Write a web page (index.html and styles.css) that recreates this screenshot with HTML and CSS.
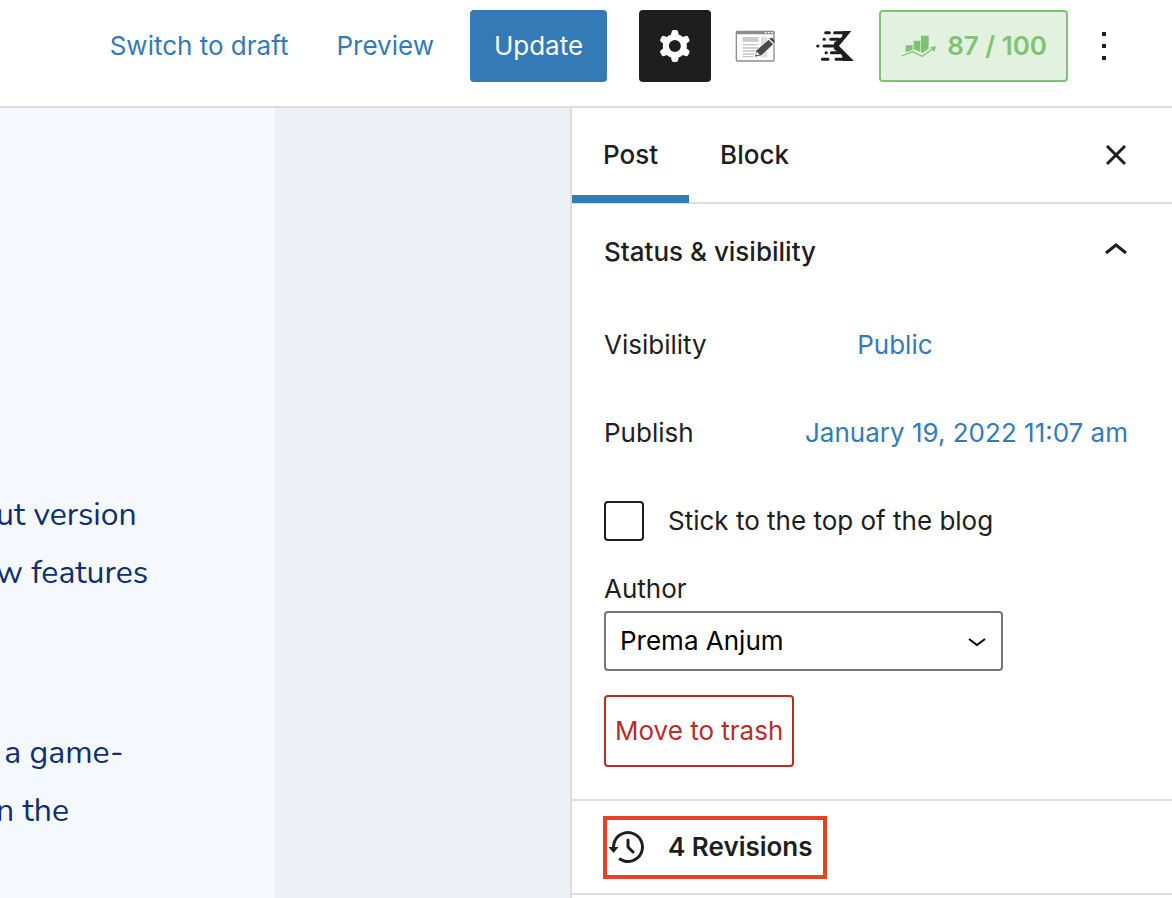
FILE: index.html
```html
<!DOCTYPE html>
<html lang="en">
<head>
<meta charset="utf-8">
<meta name="viewport" content="width=device-width, initial-scale=1">
<title>Edit Post</title>
<link rel="stylesheet" href="styles.css">
</head>
<body>
<div class="editor">
  <header class="topbar">
    <button type="button" class="btn btn-link">Switch to draft</button>
    <button type="button" class="btn btn-link">Preview</button>
    <button type="button" class="btn btn-primary">Update</button>
    <div class="tools">
      <button type="button" class="btn btn-icon is-pressed" aria-label="Settings">
        <svg width="48" height="48" viewBox="0 0 24 24" fill="currentColor"><path fill-rule="evenodd" d="M10.289 4.836A1 1 0 0111.275 4h1.306a1 1 0 01.987.836l.244 1.466c.787.26 1.503.679 2.108 1.218l1.393-.522a1 1 0 011.216.437l.653 1.13a1 1 0 01-.23 1.273l-1.148.944a6.025 6.025 0 010 2.435l1.149.946a1 1 0 01.23 1.272l-.653 1.13a1 1 0 01-1.216.437l-1.394-.522c-.605.54-1.32.958-2.108 1.218l-.244 1.466a1 1 0 01-.987.836h-1.306a1 1 0 01-.986-.836l-.244-1.466a5.995 5.995 0 01-2.108-1.218l-1.394.522a1 1 0 01-1.217-.436l-.653-1.131a1 1 0 01.23-1.272l1.149-.946a6.026 6.026 0 010-2.435l-1.148-.944a1 1 0 01-.23-1.272l.653-1.131a1 1 0 011.217-.437l1.393.522a5.994 5.994 0 012.108-1.218l.244-1.466zM14.929 12a3 3 0 11-6 0 3 3 0 016 0z"/></svg>
      </button>
      <button type="button" class="btn btn-icon" aria-label="Page editor">
        <svg width="40" height="32" viewBox="0 0 120 96">
          <rect x="4" y="4" width="113" height="89" rx="3" fill="#fff" stroke="#8c8c8c" stroke-width="4"/>
          <path fill="#8c8c8c" d="M4 3h112v10H4z"/>
          <path stroke="#fff" stroke-width="4" stroke-dasharray="5 4" d="M90 8h24"/>
          <path fill="#ccc" d="M23 21h48v15H23z"/>
          <path fill="#ddd" d="M78 21h19v61H78z"/>
          <path stroke="#c4c4c4" stroke-width="4" d="M23 44h48M23 54h48M23 63h40M23 72h34M23 80h32"/>
          <path fill="#4a4a4a" stroke="#fff" stroke-width="4" paint-order="stroke" d="M60 80l5-19 36-32 13 14-35 33z"/>
          <path fill="#4a4a4a" d="M103 26q6-6 12 0 6 7 1 13z"/>
          <path fill="#fff" d="M66 65l8 9-8 2-3-3z"/>
        </svg>
      </button>
      <button type="button" class="btn btn-icon" aria-label="Performance">
        <svg width="40" height="32" viewBox="0 0 120 96" fill="#1e1e1e" stroke="#1e1e1e">
          <path stroke="none" d="M109 3H84l-3 17-24 18v20l24 18 3 17h33L72 48z"/>
          <path fill="none" stroke-width="9" stroke-linecap="round" d="M32 8h11M59 8h25M27 28h1M47 28h24M8 48h1M27 48h36M33 68h1M49 68h24M22 88h17M63 88h25"/>
        </svg>
      </button>
      <button type="button" class="btn btn-score" aria-label="SEO score 87 / 100">
        <svg width="36" height="24" viewBox="0 0 108 72" fill="#7cc471">
          <path d="M14 34h21v13l-21 8zM38 20h20v34L38 46zM60 5h23v39L64 57l-4-2z"/>
          <path fill="none" stroke="#7cc471" stroke-width="4" d="M2 66l33-13 29 14 33-24"/>
          <path d="M88 40l17-3-5 17z"/>
        </svg>
        <span>87 / 100</span>
      </button>
      <button type="button" class="btn btn-icon" aria-label="Options">
        <svg width="48" height="48" viewBox="0 0 24 24" fill="currentColor"><path d="M11 5h2v2h-2zM11 11h2v2h-2zM11 17h2v2h-2z"/></svg>
      </button>
    </div>
  </header>

  <div class="workspace">
    <main class="canvas">
      <article class="post">
        <p>ut version<br>w features</p>
        <p>&nbsp;a game-<br>n the</p>
      </article>
    </main>

    <aside class="sidebar">
      <nav class="tabs">
        <button type="button" class="tab is-active">Post</button>
        <button type="button" class="tab">Block</button>
        <button type="button" class="btn btn-close" aria-label="Close settings">
          <svg width="48" height="48" viewBox="0 0 48 48" fill="none" stroke="currentColor" stroke-width="3"><path d="M15 15l18 18M33 15L15 33"/></svg>
        </button>
      </nav>

      <section class="panel">
        <h2 class="panel-title">
          <button type="button" class="panel-toggle" aria-expanded="true">
            <span>Status &amp; visibility</span>
            <svg width="48" height="48" viewBox="0 0 48 48" fill="none" stroke="currentColor" stroke-width="3"><path d="M14 25l10-8 10 8"/></svg>
          </button>
        </h2>
        <div class="panel-body">
          <div class="row">
            <span class="row-label">Visibility</span>
            <button type="button" class="btn row-value">Public</button>
          </div>
          <div class="row">
            <span class="row-label">Publish</span>
            <button type="button" class="btn row-value">January 19, 2022 11:07 am</button>
          </div>
          <div class="check">
            <input type="checkbox" id="sticky">
            <label for="sticky">Stick to the top of the blog</label>
          </div>
          <div class="field">
            <label for="author">Author</label>
            <div class="select">
              <select id="author"><option>Prema Anjum</option></select>
              <svg class="chevron" width="20" height="12" viewBox="0 0 20 12" fill="none" stroke="#000" stroke-width="2"><path d="M2 3l8 6 8-6"/></svg>
            </div>
          </div>
          <button type="button" class="btn btn-trash">Move to trash</button>
        </div>
      </section>

      <section class="panel revisions">
        <a class="revisions-link" href="#revisions">
          <svg width="48" height="48" viewBox="0 0 24 24" fill="currentColor"><path d="M5.5 12h1.75l-2.5 3-2.5-3H4a8 8 0 113.134 6.35l.907-1.194A6.5 6.5 0 105.5 12zm9.53 1.97l-2.28-2.28V8.5a.75.75 0 00-1.5 0V12a.747.747 0 00.218.529l1.282-.84-1.28.842 2.5 2.5a.75.75 0 101.06-1.061z"/></svg>
          <span>4 Revisions</span>
        </a>
      </section>
    </aside>
  </div>
</div>
</body>
</html>
```
FILE: styles.css
```css
* { box-sizing: border-box; }

body {
  margin: 0;
  background: #fff;
  color: #1e1e1e;
  font: 26px/32px Inter, "Liberation Sans", sans-serif;
}

button, select, input { font: inherit; color: inherit; margin: 0; }
svg { display: block; flex: none; }

.editor { display: flex; flex-direction: column; min-height: 100vh; }

.topbar {
  display: flex;
  justify-content: flex-end;
  align-items: center;
  padding: 10px 32px 24px;
  border-bottom: 2px solid #ddd;
}

.btn {
  display: flex;
  align-items: center;
  justify-content: center;
  height: 72px;
  padding: 0 24px;
  border: 0;
  border-radius: 4px;
  background: none;
  white-space: nowrap;
  cursor: pointer;
}
.btn-link { color: #347ab7; }
.btn-primary { margin-left: 12px; background: #347ab7; color: #fff; }

.tools { display: flex; gap: 8px; margin-left: 32px; }
.btn-icon { width: 72px; padding: 0; }
.btn-icon:last-child { margin-left: -8px; }
.is-pressed { background: #1e1e1e; color: #fff; }
.btn-score {
  gap: 10px;
  padding: 0 19px 0 20px;
  border: 2px solid #7cc471;
  background: #e3f1e0;
  color: #7cc471;
  font-weight: 600;
}

.workspace { display: flex; flex: 1; }

.canvas { flex: 1; min-width: 0; background: #edf1f5; overflow: hidden; }
.post {
  width: calc(100% - 295px);
  height: 100%;
  padding-top: 378px;
  background: #f5f9ff;
  color: #10306b;
  font: 32px/58px Nunito, Lato, "Open Sans", sans-serif;
}
.post p { margin: 0 0 0 -4px; white-space: nowrap; }
.post p + p { margin-top: 122px; }

.sidebar { flex: none; width: 602px; border-left: 2px solid #ddd; background: #fff; }

.tabs {
  display: flex;
  height: 96px;
  padding-right: 20px;
  border-bottom: 2px solid #ddd;
  align-items: center;
}
.tab {
  height: 95px;
  padding: 0 31px;
  border: 0;
  background: none;
  font-weight: 500;
}
.is-active { box-shadow: inset 0 -8px #347ab7; }
.btn-close { margin-left: auto; padding: 0 12px; }

.panel { border-bottom: 2px solid #ddd; }
.panel-title { margin: 0; font-size: 26px; font-weight: 500; }
.panel-toggle {
  display: flex;
  align-items: center;
  justify-content: space-between;
  width: 100%;
  height: 96px;
  padding: 0 32px;
  border: 0;
  background: none;
}
.panel-body { padding: 9px 32px 32px; }

.row { display: flex; align-items: center; margin-bottom: 16px; }
.row-label { flex: 0 1 45%; }
.row-value { padding: 0 12px; color: #347ab7; }

.check { display: flex; align-items: center; gap: 24px; margin: 32px 0; }
.check input {
  appearance: none;
  width: 40px;
  height: 40px;
  border: 2px solid #1e1e1e;
  border-radius: 4px;
}

.field { margin-bottom: 24px; }
.field label { display: block; margin-bottom: 6px; }
.select { position: relative; max-width: 399px; }
.select select {
  display: block;
  appearance: none;
  width: 100%;
  height: 60px;
  padding: 0 48px 0 14px;
  border: 2px solid #757575;
  border-radius: 4px;
  background: #fff;
  color: #000;
}
.chevron { position: absolute; right: 16px; top: 25px; pointer-events: none; }

.btn-trash { padding: 0 9px; border: 2px solid #b92d28; color: #b92d28; }

.revisions { display: flex; padding: 15px 31px 14px; }
.revisions-link {
  display: flex;
  align-items: center;
  gap: 16px;
  padding: 3px 10px 4px 0;
  border: 4px solid #ea4025;
  color: inherit;
  font-weight: 600;
  text-decoration: none;
}
.revisions-link svg { margin-left: -3px; }
```
